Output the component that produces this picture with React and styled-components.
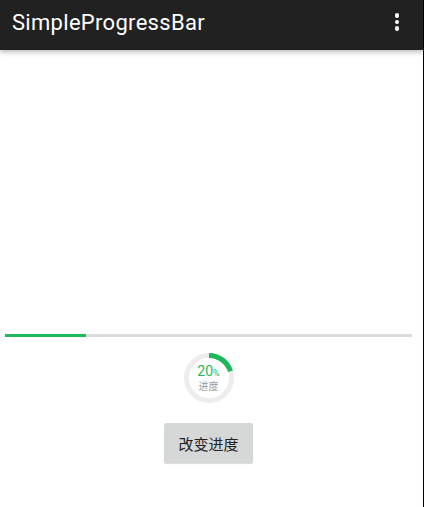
import React from "react";
import styled, { createGlobalStyle } from "styled-components";

const Global = createGlobalStyle`
  html, body { margin: 0; padding: 0; background: #000; }
  body { font-family: Roboto, "Noto Sans CJK SC", sans-serif; }
  #root { width: 424px; height: 507px; overflow: hidden; }
`;

const Screen = styled.div`
  width: 423px;
  height: 507px;
  background: #fff;
  display: flex;
  flex-direction: column;
`;

const Toolbar = styled.header`
  height: 50px;
  background: #212121;
  display: flex;
  align-items: center;
  justify-content: space-between;
  padding: 0 24px 6px 12px;
  box-sizing: border-box;
  box-shadow: 0 2px 5px rgba(0, 0, 0, 0.28);
  position: relative;
  z-index: 1;
`;

const Title = styled.h1`
  margin: 0;
  font-family: Roboto, sans-serif;
  font-weight: 400;
  font-size: 22px;
  color: #fff;
  letter-spacing: 0.3px;
`;

const Dots = styled.div`
  display: flex;
  flex-direction: column;
  gap: 2px;
  span {
    width: 4.5px;
    height: 4.5px;
    border-radius: 50%;
    background: #fff;
  }
`;

const Content = styled.main`
  flex: 1;
  display: flex;
  flex-direction: column;
  align-items: center;
  padding-top: 284px;
  padding-right: 6px;
`;

const Track = styled.div`
  align-self: flex-start;
  margin-left: 5px;
  width: 407px;
  height: 3px;
  background: #dcdcdc;
  display: flex;
`;

const Fill = styled.div`
  height: 100%;
  background: #1dba5c;
`;

const Ring = styled.div`
  margin-top: 15px;
  width: 52px;
  height: 52px;
  position: relative;
  display: flex;
  flex-direction: column;
  align-items: center;
  justify-content: center;
  svg {
    position: absolute;
    inset: 0;
  }
`;

const Percent = styled.div`
  font-family: Roboto, sans-serif;
  color: #1dba5c;
  font-size: 14px;
  line-height: 14px;
  margin-top: -1px;
  small {
    font-size: 9px;
  }
`;

const Label = styled.div`
  font-family: "Noto Sans CJK SC", sans-serif;
  color: #9a9a9a;
  font-size: 10px;
  line-height: 11px;
`;

const Button = styled.button`
  margin-top: 19px;
  width: 89px;
  height: 40px;
  border: none;
  border-radius: 2px;
  background: #d6d7d7;
  color: #222;
  font-family: "Noto Sans CJK SC", sans-serif;
  font-size: 15px;
  padding: 0;
  box-shadow: 0 1px 1px rgba(0, 0, 0, 0.15);
`;

export default function App() {
  const progress = 20;
  const r = 22.5;
  const c = 2 * Math.PI * r;
  return (
    <>
      <Global />
      <Screen>
        <Toolbar>
          <Title>SimpleProgressBar</Title>
          <Dots>
            <span />
            <span />
            <span />
          </Dots>
        </Toolbar>
        <Content>
          <Track>
            <Fill style={{ width: `${progress}%` }} />
          </Track>
          <Ring>
            <svg width="52" height="52" viewBox="0 0 52 52">
              <circle cx="26" cy="26" r={r} fill="none" stroke="#ededed" strokeWidth="5" />
              <circle
                cx="26"
                cy="26"
                r={r}
                fill="none"
                stroke="#1dba5c"
                strokeWidth="5"
                strokeDasharray={`${(c * progress) / 100} ${c}`}
                transform="rotate(-90 26 26)"
              />
            </svg>
            <Percent>
              {progress}
              <small>%</small>
            </Percent>
            <Label>进度</Label>
          </Ring>
          <Button>改变进度</Button>
        </Content>
      </Screen>
    </>
  );
}
